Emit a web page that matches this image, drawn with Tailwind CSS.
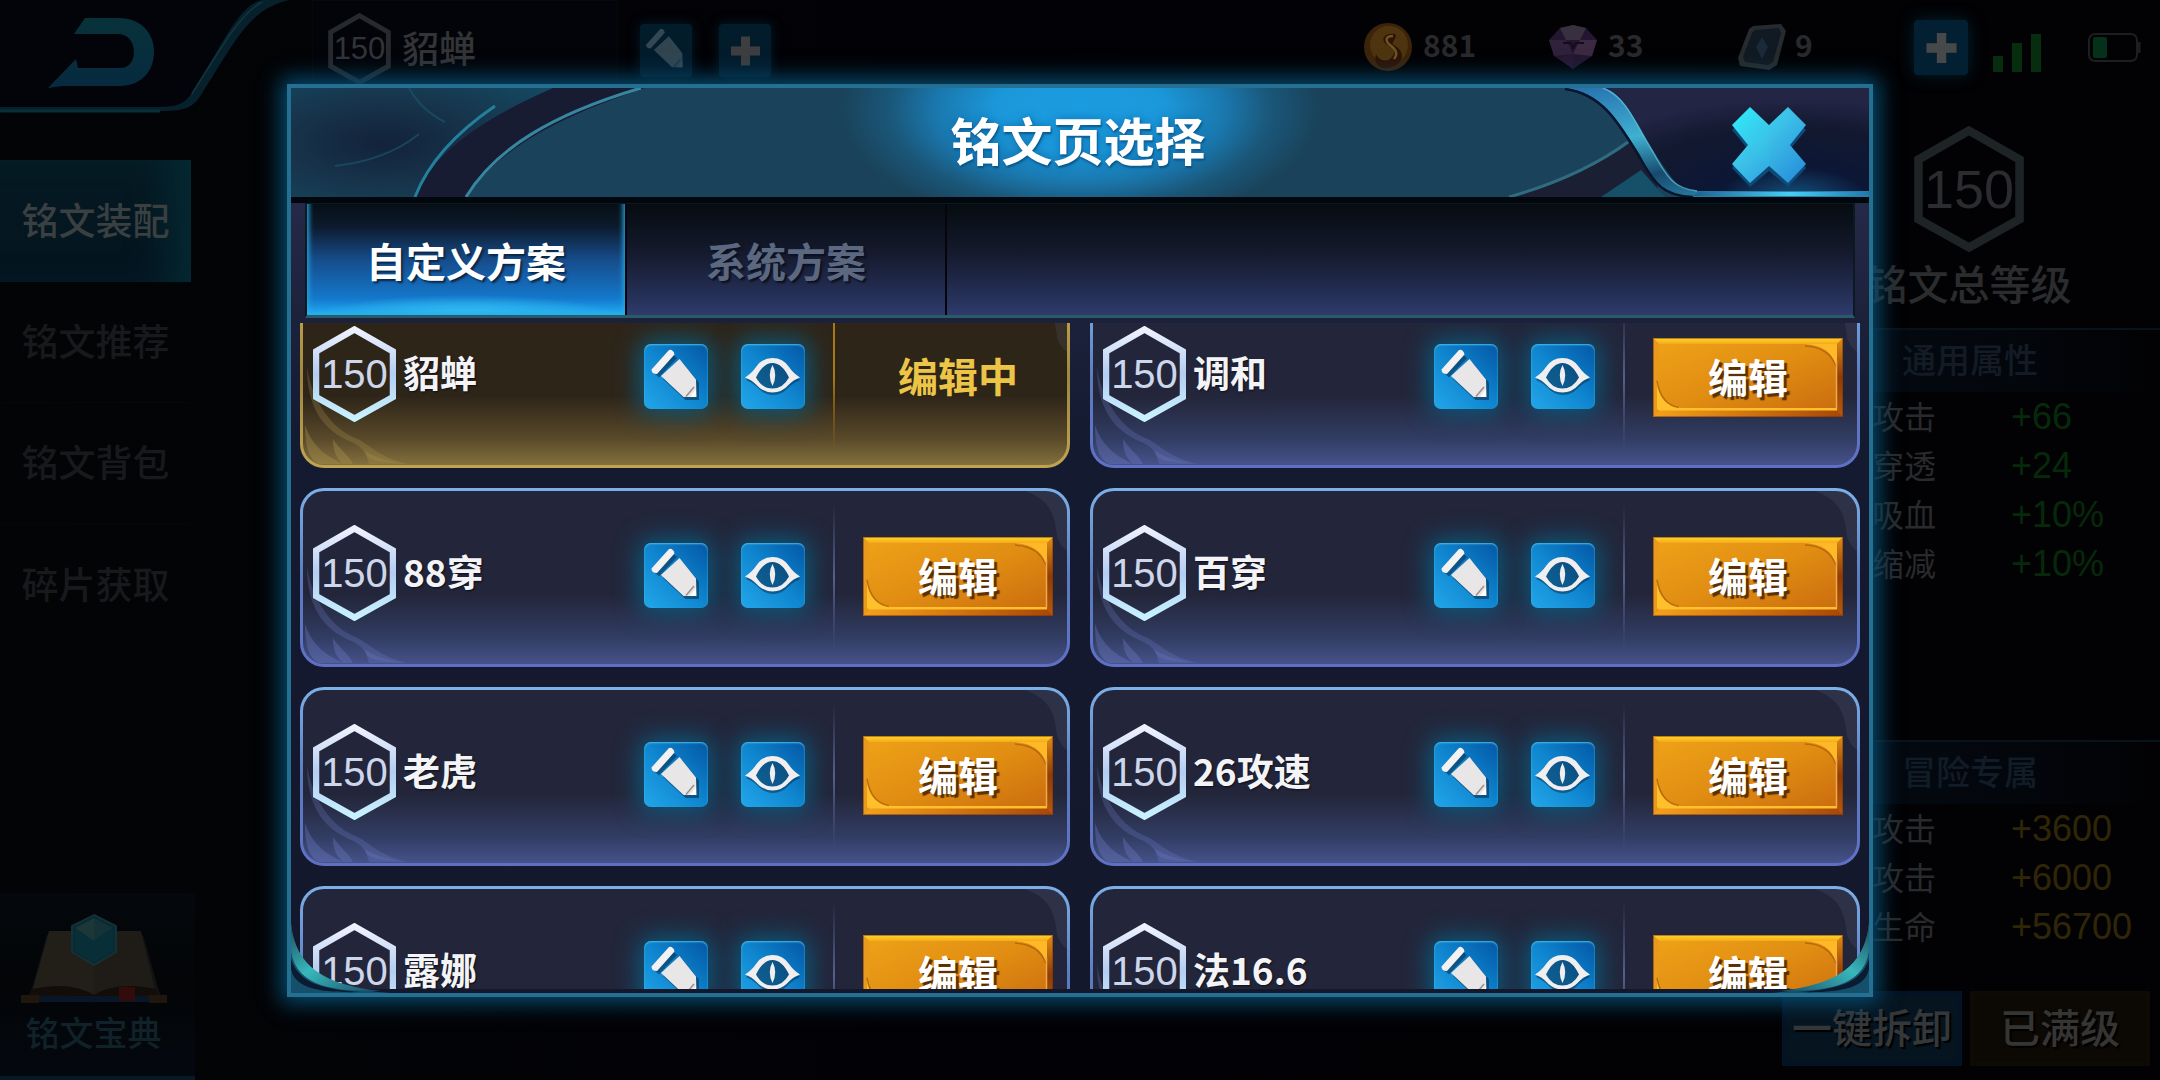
<!DOCTYPE html>
<html lang="zh-CN">
<head>
<meta charset="utf-8">
<meta name="viewport" content="width=device-width, initial-scale=1">
<title>铭文页选择</title>
<script src="https://cdn.jsdelivr.net/npm/@tailwindcss/browser@4"></script>
</head>
<body class="bg-[#020305] font-['Noto_Sans_CJK_SC',sans-serif] font-medium">

<svg class="absolute h-0 w-0" aria-hidden="true">
  <defs>
    <linearGradient id="hexStroke" x1="0" y1="0" x2="0" y2="1"><stop offset="0" stop-color="#eef2ff"/><stop offset=".5" stop-color="#b4cdf2"/><stop offset="1" stop-color="#c8f2ff"/></linearGradient>
    <linearGradient id="gold" x1="0" y1="0" x2="1" y2="1"><stop offset="0" stop-color="#efa318"/><stop offset=".5" stop-color="#e08d12"/><stop offset="1" stop-color="#c8680e"/></linearGradient>
    <linearGradient id="goldTop" x1="0" y1="0" x2="0" y2="1"><stop offset="0" stop-color="#ffd82a"/><stop offset="1" stop-color="#f5a91a"/></linearGradient>
    <linearGradient id="goldBottom" x1="0" y1="0" x2="1" y2="0"><stop offset="0" stop-color="#f3a21c"/><stop offset=".4" stop-color="#d97d12"/><stop offset="1" stop-color="#a84608"/></linearGradient>
    <linearGradient id="goldRight" x1="0" y1="0" x2="0" y2="1"><stop offset="0" stop-color="#e08b14"/><stop offset=".5" stop-color="#8f3d04"/><stop offset="1" stop-color="#b85a0a"/></linearGradient>
    <linearGradient id="closeFill" x1="0" y1="0" x2="1" y2="1"><stop offset="0" stop-color="#2cf0fa"/><stop offset=".45" stop-color="#3cc0e8"/><stop offset="1" stop-color="#2489d8"/></linearGradient>
    <linearGradient id="ribbon" x1="0" y1="0" x2=".5" y2="1"><stop offset="0" stop-color="#2770b0"/><stop offset=".45" stop-color="#3fb0cf"/><stop offset=".75" stop-color="#174a6c"/><stop offset="1" stop-color="#2a7fa8"/></linearGradient>
    <radialGradient id="closeBg" cx=".72" cy="1" r=".9"><stop offset="0" stop-color="#14517c"/><stop offset=".3" stop-color="#0c1736"/><stop offset=".7" stop-color="#12182f"/><stop offset="1" stop-color="#222544"/></radialGradient>
    <linearGradient id="closeLine" x1="0" y1="0" x2="1" y2="0"><stop offset="0" stop-color="#1c5f90"/><stop offset=".55" stop-color="#46d0f6"/><stop offset="1" stop-color="#1f78ae"/></linearGradient>
    <radialGradient id="headLeft" cx=".35" cy=".5" r=".8"><stop offset="0" stop-color="#12223a"/><stop offset=".5" stop-color="#17354c"/><stop offset="1" stop-color="#134a62"/></radialGradient>
    <linearGradient id="backArrow" x1="0" y1="0" x2="0" y2="1"><stop offset="0" stop-color="#08323a"/><stop offset="1" stop-color="#062a40"/></linearGradient>
    <linearGradient id="cornerTeal" x1="0" y1="0" x2="1" y2="1"><stop offset="0" stop-color="#1d4a5c"/><stop offset=".45" stop-color="#38b8bc"/><stop offset="1" stop-color="#1a4a66"/></linearGradient>

    <symbol id="hex" viewBox="0 0 83 96"><path d="M41.500 3.500 80 25.500V71L41.500 92.500 3 71V25.500Z" fill="none" stroke-width="6.500"/></symbol>
    <symbol id="pencil" viewBox="0 0 64 65">
      <g fill="#0a2a48" opacity=".55" transform="translate(2 3)"><path d="M7.500 25.500 25 6l6 5-18 19.500Z"/><path d="M36 15 53 35.500V53H39.500L17 32Z"/></g>
      <path fill="#f3f1f1" d="M7.500 25.500 25 6q4-1 5.500 4.500L13 30q-5.500 0-5.500-4.500Z"/>
      <path fill="#e8e6e6" d="M35.500 15 52 35.500 52.500 53H39.500L17 32Z"/>
      <path d="M50 43 42 52.500" stroke="#9c8e88" stroke-width="1.500" fill="none"/>
      <path d="M52 45v8h-6Z" fill="#fff"/>
    </symbol>
    <symbol id="eye" viewBox="0 0 64 65">
      <path d="M5 36Q12 31 16 26 22 17 32 17T48 26Q52 31 59 36 52 39 48 43 41 51 32 51T16 43Q12 39 5 36Z" fill="#0a2a48" opacity=".5"/>
      <path fill="#f0eeee" fill-rule="evenodd" d="M4 33.500Q11 29 15 23 21 14 31.500 14T48 23Q52 29 59 33.500 52 36 48 40.500 41 48.500 31.500 48.500T15 40.500Q11 36 4 33.500ZM15 33.500Q21 44.500 31.500 44.500T48 33.500Q41 19 31.500 19T15 33.500Z"/>
      <path fill="#f0eeee" d="M31.500 21Q37 31 31.500 42 26 31 31.500 21Z"/>
    </symbol>
    <symbol id="plus" viewBox="0 0 52 52"><path d="M22 12h9v10h10v9H31v10h-9V31H12v-9h10Z"/></symbol>
    <symbol id="flourish" viewBox="0 0 110 100">
      <path d="M4 2C8 30 24 60 50 72 66 78 74 92 104 99 80 96 66 98 62 88 56 78 48 78 38 72 14 58 4 34 4 2Z" opacity=".26"/>
      <path d="M2 60C10 84 26 92 40 99H16C6 94 2 82 2 60Z" opacity=".34"/>
      <path d="M30 74C36 84 46 90 50 99H40C32 92 30 84 30 74Z" opacity=".34"/>
      <path d="M62 86C72 92 84 97 104 99H66Z" opacity=".26"/>
    </symbol>
    <symbol id="goldPlate" viewBox="0 0 190 78" preserveAspectRatio="none">
      <rect width="190" height="78" fill="url(#gold)"/>
      <path d="M0 0H190L184 6H6Z" fill="url(#goldTop)"/>
      <path d="M0 0 6 6V70L0 78Z" fill="#e89a1c"/>
      <path d="M190 0V78L184 71V6Z" fill="url(#goldRight)"/>
      <path d="M0 78 6 71H184L190 78Z" fill="url(#goldBottom)"/>
      <path d="M4 45Q7 67 28 69H184V71.500H6L4 70Z" fill="#ffc02c"/>
      <path d="M152 6Q178 8 182 26L184 28V6Z" fill="#ffb928"/>
      <path d="M152 8Q176 9 183 28" fill="none" stroke="#9c5208" stroke-width="1.500" opacity=".6"/>
      <path d="M4 42Q8 66 26 68.500" fill="none" stroke="#9c5208" stroke-width="1.500" opacity=".6"/>
      <path d="M183.500 22V70" stroke="#f0a94a" stroke-width="1.500"/>
      <rect x=".5" y=".5" width="189" height="77" fill="none" stroke="#7a2c04" opacity=".5"/>
    </symbol>
  </defs>
</svg>

<div class="relative flex h-screen min-h-[1080px] flex-col overflow-hidden bg-gradient-to-r from-[#030406] via-[#020206] to-[#020204]">

  <!-- Screen behind the dialog -->
  <header class="flex h-[112px] shrink-0 items-start">
    <button type="button" aria-label="返回" class="h-[116px] w-[290px] shrink-0">
      <svg viewBox="0 0 290 116" class="h-[116px] w-[290px]">
        <path d="M0 0H272C250 12 240 40 205 90 194 108 184 110 160 110H0Z" fill="#03040a"/>
        <path d="M0 111H162C186 111 194 108 204 90 236 40 250 8 290 0H262C238 6 226 40 192 92 186 104 176 107 158 107H0Z" fill="#06202c"/>
        <path d="M0 111H160" stroke="#09303a" stroke-width="3"/>
        <path d="M192 94C222 46 240 14 262 2" stroke="#12363e" stroke-width="1.500" fill="none"/>
        <path d="M85 18H118C142 18 154 34 154 52 154 72 140 86 120 86H62L48 88 76 59 78 68H120C130 68 134 60 134 52 134 42 128 34 118 34H74Z" fill="url(#backArrow)"/>
      </svg>
    </button>
    <div class="ml-[22px] flex h-[102px] w-[306px] shrink-0 items-start border border-[#05080c] bg-[#030409] pt-3">
      <div class="relative ml-[14px] grid h-[72px] w-[65px] place-items-center">
        <svg class="absolute inset-0 h-full w-full stroke-[#26292d]"><use href="#hex"/></svg>
        <span class="font-['Liberation_Sans',sans-serif] text-[31px] leading-10 font-normal text-[#323438]">150</span>
      </div>
      <span class="ml-2.5 pt-[14px] text-[37px] leading-10 text-[#333437]">貂蝉</span>
    </div>
    <button type="button" aria-label="改名" class="mt-6 ml-[22px] h-[53px] w-[52px] rounded-[4px] bg-[#031c2c] shadow-[0_0_12px_#031a28]">
      <svg class="h-full w-full opacity-20"><use href="#pencil"/></svg>
    </button>
    <button type="button" aria-label="新增" class="mt-6 ml-[27px] h-[53px] w-[52px] rounded-[4px] bg-[#031c2c] shadow-[0_0_12px_#031a28]">
      <svg class="h-full w-full fill-[#3c3e40]"><use href="#plus"/></svg>
    </button>

    <div class="ml-auto flex h-[94px] shrink-0 items-center pr-[18px] text-[30px] leading-10 font-bold text-[#28292b]">
      <svg class="h-[50px] w-[50px]" viewBox="0 0 50 50"><circle cx="25" cy="25" r="24" fill="#3c2409"/><circle cx="26" cy="23" r="19" fill="#4e3510"/><path d="M32 12c-10-2-15 5-9 10s12 6 6 13-14 2-16-3c-3 10 4 15 12 14s17-8 13-16-10-6-8-10 4-5 2-8Z" fill="#2f1406"/><path d="M30 14c-8 0-8 5-3 9s9 8 4 14" fill="none" stroke="#6a5520" stroke-width="2.500"/></svg>
      <span class="ml-2.5 w-[125px] pb-1.5">881</span>
      <svg class="h-[46px] w-[50px]" viewBox="0 0 50 46"><path d="M12 4 25 1 38 4 49 16 44 32 25 45 6 32 1 16Z" fill="#241630"/><path d="M12 4 25 1 38 4 32 16H18Z" fill="#38303e"/><path d="M1 16h17l7 14-19 2Z" fill="#30223a"/><path d="M49 16H32L25 30l19 2Z" fill="#3c2a42"/><path d="M25 30v15L10 34Z" fill="#281834"/><path d="M15 19h8l2 5 3-5h8" fill="none" stroke="#150b1c" stroke-width="2"/></svg>
      <span class="ml-2.5 w-[129px] pb-1.5">33</span>
      <svg class="h-[48px] w-[50px]" viewBox="0 0 50 48"><path d="M16 3 44 1l5 7-9 34-8 5-29-4-2-8L12 6Z" fill="#282b2d"/><path d="M18 7 42 5l2 5-8 29-5 3-23-3-2-5L15 10Z" fill="#111a22"/><path d="m25 14 6 10-6 12-6-12Z" fill="#1a2a3a"/></svg>
      <span class="ml-2 w-[119px] pb-1.5">9</span>
      <button type="button" aria-label="充值" class="h-[55px] w-[54px] rounded-[4px] bg-[#032032] shadow-[0_0_16px_#03202e]">
        <svg class="h-full w-full fill-[#464849]"><use href="#plus"/></svg>
      </button>
      <svg class="mt-3 ml-[24px] h-[38px] w-[50px] fill-[#062e0e]" viewBox="0 0 50 38"><path d="M1 22h10v16H1ZM20 9h10v29H20ZM39 0h10v38H39Z"/></svg>
      <svg class="ml-[46px] h-[29px] w-[54px]" viewBox="0 0 54 29"><rect x="1" y="1" width="48" height="27" rx="6" fill="none" stroke="#1c1e20" stroke-width="2"/><path d="M51 9v11" stroke="#1c1e20" stroke-width="3"/><rect x="5" y="4" width="14" height="21" rx="2" fill="#053019"/></svg>
    </div>
  </header>

  <div class="flex min-h-0 flex-1 justify-between">
    <div class="flex w-[195px] shrink-0 flex-col">
      <nav class="w-[191px] pt-12 text-center text-[37px] leading-none text-[#18191c]">
        <a href="#equip" class="flex h-[122px] items-center justify-center bg-gradient-to-b from-[#051a22] to-[#04141f] pb-1 text-[#3a3f42] shadow-[inset_-40px_0_40px_-20px_#052a34]">铭文装配</a>
        <a href="#recommend" class="flex h-[121px] items-center justify-center border-b border-[#05080a] pb-1">铭文推荐</a>
        <a href="#bag" class="flex h-[122px] items-center justify-center border-b border-[#05080a] pb-1">铭文背包</a>
        <a href="#shard" class="flex h-[121px] items-center justify-center pb-1">碎片获取</a>
      </nav>
      <a href="#codex" class="mt-auto flex h-[187px] w-[195px] flex-col items-center border-b-4 border-[#061a24] bg-gradient-to-b from-[#04080c] via-[#030507] to-[#04080f] pt-[20px] pr-2 text-[34px] leading-none text-[#102129]">
        <svg class="h-[96px] w-[146px]" viewBox="0 0 146 96">
          <path d="M10 78 26 22 56 20 73 26 92 20 122 22 138 78 142 88H4Z" fill="#111214"/>
          <path d="M12 76 28 18H62L73 24V82Q50 70 12 76Z" fill="#221e18"/><path d="M134 76 120 18H86L73 24V82Q96 70 134 76Z" fill="#1f1b16"/>
          <path d="M12 76Q50 68 73 82 96 68 134 76L138 84Q96 78 73 90 50 78 8 84Z" fill="#120d09"/>
          <path d="M8 86H138" stroke="#0a1528" stroke-width="6"/><path d="M0 82h18v8H0ZM128 82h18v8h-18Z" fill="#20160e"/><path d="M98 74h16v14H98Z" fill="#320c0a"/>
          <path d="M73 2 95 13V39L73 52 51 39V13Z" fill="#0a2a32" stroke="#153038" stroke-width="2"/>
          <path d="M73 5V28L54 15Z" fill="#1c3836"/><path d="M73 5 92 15 73 28Z" fill="#143238"/><path d="M54 15 73 28 92 15V38L73 49 54 38Z" fill="#082e38"/>
        </svg>
        <span class="mt-1.5 whitespace-nowrap">铭文宝典</span>
      </a>
    </div>

    <aside class="flex w-[378px] shrink-0 flex-col">
      <div class="pl-[86px]">
        <div class="flex w-[202px] flex-col items-center pt-[14px]">
          <div class="relative grid h-[126px] w-[110px] place-items-center">
            <svg class="absolute inset-0 h-full w-full fill-none stroke-[#1e2326]"><use href="#hex"/></svg>
            <span class="font-['Liberation_Sans',sans-serif] text-[54px] leading-16 font-normal text-[#2a2c30]">150</span>
          </div>
          <h2 class="mt-2.5 text-[41px] leading-none font-medium whitespace-nowrap text-[#2b2c2e]">铭文总等级</h2>
        </div>
        <section class="pt-[25px]">
          <h3 class="flex h-16 items-center border-t-2 border-[#08121a] bg-gradient-to-r from-[#040a12] to-transparent pb-1 pl-[34px] text-[34px] leading-none font-medium text-[#131c26]">通用属性</h3>
          <dl class="grid auto-rows-[49px] grid-cols-[143px_1fr] items-center text-[32px] leading-10 font-normal text-[#292a2c]" id="common"></dl>
        </section>
        <section class="pt-[152px]">
          <h3 class="flex h-16 items-center border-t-2 border-[#08141c] bg-gradient-to-r from-[#040a12] to-transparent pb-1 pl-[34px] text-[34px] leading-none font-medium text-[#101c28]">冒险专属</h3>
          <dl class="grid auto-rows-[49px] grid-cols-[143px_1fr] items-center text-[32px] leading-10 font-normal text-[#292a2c]" id="adventure"></dl>
        </section>
      </div>
      <div class="mt-auto flex gap-2 pb-[14px] text-[40px] leading-none">
        <button type="button" class="h-[75px] w-[180px] border-4 border-[#041226] bg-[#06141f] pb-1.5 whitespace-nowrap text-[#35383a] [text-shadow:2px_2px_1px_#000]">一键拆卸</button>
        <button type="button" class="h-[75px] w-[180px] border-4 border-[#0e0a04] bg-[#0c0804] pb-1.5 text-[#353534] [text-shadow:2px_2px_1px_#000]">已满级</button>
      </div>
    </aside>
  </div>

  <!-- Dialog -->
  <div class="absolute inset-0 flex px-[287px] pt-[84px] pb-[83px]">
    <div role="dialog" aria-labelledby="dlg-title" class="relative flex min-w-0 flex-1 flex-col overflow-hidden border-4 border-[#246f92] bg-[#13182c] shadow-[0_0_20px_6px_#064c70]">

      <header class="relative flex h-[109px] shrink-0 items-center justify-center bg-[#1a425a] pb-1.5">
        <svg class="absolute inset-y-0 left-0 h-[109px] w-[360px]" viewBox="0 0 360 109">
          <path d="M0 0H264C190 36 140 74 124 109H0Z" fill="url(#headLeft)"/>
          <path d="M124 109C140 70 180 36 262 0H354C270 28 208 60 175 109Z" fill="#171c32"/>
          <path d="M124 109C136 78 160 48 204 18" fill="none" stroke="#23809c" stroke-width="3"/>
          <path d="M175 109C205 60 262 26 350 0" fill="none" stroke="#3786a0" stroke-width="3"/>
          <path d="M118 0Q130 22 154 34M44 78Q96 72 128 46" fill="none" stroke="#1d5870" stroke-width="2" opacity=".6"/>
        </svg>
        <div class="absolute inset-y-0 left-1/2 w-[480px] -translate-x-1/2 bg-[radial-gradient(ellipse_50%_110%_at_50%_20%,#1b9ce0_0%,#1b98da_35%,#1a78ae_60%,#1a5678_80%,transparent_100%)]"></div>
        <h1 id="dlg-title" class="relative pr-1 text-[51px] leading-none font-bold text-white [text-shadow:0_0_10px_#0d6fb0,1px_2px_2px_#0a4a74]">铭文页选择</h1>
        <svg class="absolute inset-y-0 right-0 h-[109px] w-[380px]" viewBox="0 0 380 109">
          <path d="M22 109C66 96 110 78 142 54L166 84 170 109Z" fill="#1a1f33"/>
          <path d="M112 109 152 82 176 109Z" fill="#155068"/>
          <path d="M20 109C66 96 106 78 139 54" fill="none" stroke="#2f6c80" stroke-width="3"/>
          <path d="M108 0H380V109H200C160 70 150 20 108 0Z" fill="url(#closeBg)"/>
          <path d="M76 0H114C136 6 146 34 164 64 180 92 186 102 210 103H380V109H204C176 108 168 98 150 66 128 30 112 4 76 0Z" fill="url(#ribbon)"/>
          <path d="M210 104H380V108H204Z" fill="url(#closeLine)"/>
          <path d="M114 0C136 8 146 34 164 64 178 90 186 101 208 103" fill="none" stroke="#5ccbe6" stroke-width="1.500" opacity=".7"/>
          <path d="M76 1C112 6 128 32 150 68 166 98 176 108 204 109" fill="none" stroke="#07162c" stroke-width="2.500"/>
        </svg>
        <button type="button" aria-label="关闭" class="absolute top-[15px] right-[60px] h-[88px] w-[80px]">
          <svg viewBox="0 0 80 88" class="h-full w-full">
            <path d="M21 10 40 27 59 10 77 27 62 45 77 65 59 84 40 68 21 84 3 65 18 45 3 27Z" fill="#0d4a78"/>
            <path d="M21 4 40 22 59 4 77 22 61 42 77 61 59 80 40 63 21 80 3 61 19 42 3 22Z" fill="url(#closeFill)"/>
            <path d="M40 22 40 63 19 42Z" fill="#2fd4ee" opacity=".15"/>
          </svg>
        </button>
      </header>

      <div class="h-1.5 shrink-0 bg-[#02070e]"></div>
      <div class="flex min-h-0 flex-1 flex-col bg-gradient-to-b from-[#242947] via-[#141a30] via-30% to-[#14182d] pb-1">
        <div role="tablist" class="mx-[14px] flex h-[115px] shrink-0 border-x-2 border-t border-b-[3px] border-[#0b1a22] border-b-[#285a68] bg-gradient-to-b from-[#060c10] via-[#151a2e] via-45% to-[#2e3b6c] text-[40px] leading-none font-bold">
          <button type="button" role="tab" aria-selected="true" class="w-[318px] bg-[radial-gradient(ellipse_50%_22%_at_50%_104%,#7aecff_0%,#2fb4ee_45%,transparent_100%),linear-gradient(to_bottom,#070f16_0%,#0c1a2c_20%,#164c8a_50%,#1478cc_85%,#1c98e4_100%)] text-white shadow-[inset_0_-18px_14px_-14px_#27b4f4,inset_5px_-4px_5px_-3px_#25a4e0,inset_-5px_-4px_5px_-3px_#25a4e0] [text-shadow:2px_2px_2px_#0a2648]">自定义方案</button>
          <button type="button" role="tab" aria-selected="false" class="w-[322px] border-x-2 border-[#04060c] text-[#5c6880] [text-shadow:2px_2px_2px_#0a1020]">系统方案</button>
        </div>
        <div class="mt-[5px] min-h-0 flex-1 overflow-hidden px-[9px]">
          <ul id="pages" class="-mt-[34px] grid grid-cols-2 gap-5"></ul>
        </div>
      </div>

      <svg class="pointer-events-none absolute bottom-0 left-0 h-[70px] w-[100px]" viewBox="0 0 100 70">
        <path d="M0 0C4 44 34 66 100 70H0Z" fill="#14506c"/>
        <path d="M0 0C4 44 34 62 90 68 46 68 6 66 0 28Z" fill="url(#cornerTeal)"/>
        <path d="M0 36C8 60 30 66 70 69 30 70 4 66 0 46Z" fill="#0b1c30"/>
      </svg>
      <svg class="pointer-events-none absolute right-0 bottom-0 h-[70px] w-[100px] -scale-x-100" viewBox="0 0 100 70">
        <path d="M0 0C4 44 34 66 100 70H0Z" fill="#14506c"/>
        <path d="M0 0C4 44 34 62 90 68 46 68 6 66 0 28Z" fill="url(#cornerTeal)"/>
        <path d="M0 36C8 60 30 66 70 69 30 70 4 66 0 46Z" fill="#0b1c30"/>
      </svg>
    </div>
  </div>
</div>

<script>
  const pages = [
    { name: '貂蝉', active: true }, { name: '调和' },
    { name: '88穿' }, { name: '百穿' },
    { name: '老虎' }, { name: '26攻速' },
    { name: '露娜' }, { name: '法16.6' },
  ];

  const normal = {
    frame: 'bg-gradient-to-b from-[#7db0e8] via-[#5c7cc0] to-[#5f70c4]',
    face: 'bg-gradient-to-b from-[#23263a] from-60% via-[#323d64] via-85% to-[#46528a]',
    flourish: 'fill-[#6f7fc8]',
    divider: 'from-transparent via-[#55618c] to-transparent',
    action: `<button type="button" class="relative h-[79px] w-[190px] pb-1 text-[40px] leading-12 font-bold text-white">
        <svg class="absolute inset-0 h-full w-full"><use href="#goldPlate"/></svg>
        <span class="relative [text-shadow:3px_3px_1px_#5a3004]">编辑</span></button>`,
  };
  const active = {
    frame: 'bg-gradient-to-b from-[#c8a850] via-[#a08840] to-[#c0a452]',
    face: 'bg-gradient-to-b from-[#2e2519] from-60% via-[#5a4a2a] via-85% to-[#84703e]',
    flourish: 'fill-[#b09850]',
    divider: 'from-[#a87a10] via-[#a87a10] to-transparent',
    action: '<strong class="w-[190px] pb-1.5 text-center text-[40px] leading-12 font-bold text-[#ecc548]">编辑中</strong>',
  };

  const iconButton = (label, id) =>
    `<button type="button" aria-label="${label}" class="h-[65px] w-[64px] rounded-[7px] bg-linear-to-bl from-[#0656a4] via-[#0f86cf] to-[#22a6ea] shadow-[0_0_24px_4px_#0a5c80,inset_0_1px_2px_#48c0ee]"><svg class="h-full w-full"><use href="#${id}"/></svg></button>`;

  document.getElementById('pages').innerHTML = pages.map(p => {
    const s = p.active ? active : normal;
    return `<li class="h-[179px] rounded-[24px] p-[3px] ${s.frame}">
      <div class="relative flex h-full items-center overflow-hidden rounded-[21px] pr-[14px] pb-0.5 pl-2.5 ${s.face}">
        <svg class="absolute bottom-0 left-0 h-[100px] w-[110px] ${s.flourish}"><use href="#flourish"/></svg>
        <svg class="absolute top-0 right-0 h-[60px] w-[60px]" viewBox="0 0 60 60"><path d="M18 0C40 8 48 20 50 46Q54 56 60 60V0Z" fill="#7d8cb8" opacity=".12"/></svg>
        <div class="relative mb-2 grid h-[96px] w-[83px] shrink-0 place-items-center">
          <svg class="absolute inset-0 h-full w-full" stroke="url(#hexStroke)"><use href="#hex"/></svg>
          <span class="font-['Liberation_Sans',sans-serif] text-[40px] leading-12 font-normal text-[#cdd6ea]">150</span>
        </div>
        <span class="relative mb-3 ml-[7px] flex-1 text-[37px] leading-14 font-bold whitespace-nowrap text-[#f4f4f6] [text-shadow:1px_1px_2px_#0a0e1c]">${p.name}</span>
        <div class="relative flex gap-[33px] pb-0.5">${iconButton('改名', 'pencil')}${iconButton('预览', 'eye')}</div>
        <div class="mx-7 h-[146px] w-0.5 bg-gradient-to-b ${s.divider}"></div>
        ${s.action}
      </div></li>`;
  }).join('');

  const rows = (list, color) => list.map(([k, v]) =>
    `<dt class="pl-1 pb-1">${k}</dt><dd class="font-['Liberation_Sans',sans-serif] text-[36px] ${color}">${v}</dd>`).join('');
  document.getElementById('common').innerHTML = rows([['攻击', '+66'], ['穿透', '+24'], ['吸血', '+10%'], ['缩减', '+10%']], 'text-[#06290a]');
  document.getElementById('adventure').innerHTML = rows([['攻击', '+3600'], ['攻击', '+6000'], ['生命', '+56700']], 'text-[#302607]');
</script>
</body>
</html>
